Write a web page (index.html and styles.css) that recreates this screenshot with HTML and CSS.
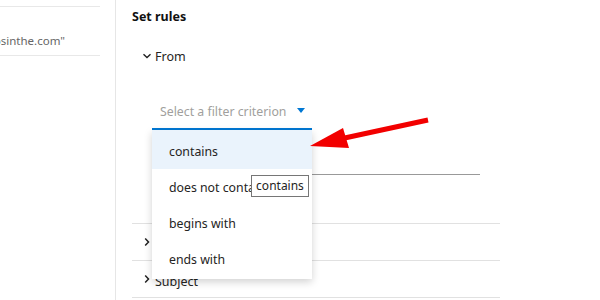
FILE: index.html
```html
<!DOCTYPE html>
<html lang="en">
<head>
  <meta charset="UTF-8" />
  <title>Set rules</title>
  <link rel="stylesheet" href="styles.css">
</head>
<body>
  <div class="sidebar">
    <div class="side-row">
      <span>From "info@absinthe.com"</span>
    </div>
  </div>

  <div class="rules">
    <h2 class="rules-title">Set rules</h2>

    <div class="group-head open">
      <svg class="chev" width="10" height="10" viewBox="0 0 10 10"><path d="M1.5 3.2 L5 6.5 L8.5 3.2" fill="none" stroke="#222" stroke-width="1.4"/></svg>
      <span>From</span>
    </div>

    <div class="filter">
      <div class="select">
        <span class="placeholder">Select a filter criterion</span>
        <svg class="caret" width="8" height="5" viewBox="0 0 8 5"><path d="M0 0 H8 L4 5 Z" fill="#0078d4"/></svg>
      </div>
      <div class="value-line"></div>

      <ul class="menu">
        <li class="active">contains</li>
        <li>does not contain</li>
        <li>begins with</li>
        <li>ends with</li>
      </ul>
      <div class="tip">contains</div>
    </div>

    <div class="group-head closed">
      <svg class="chev" width="10" height="10" viewBox="0 0 10 10"><path d="M3.2 1.5 L6.5 5 L3.2 8.5" fill="none" stroke="#222" stroke-width="1.5"/></svg>
      <span>To</span>
    </div>
    <div class="group-head closed">
      <svg class="chev" width="10" height="10" viewBox="0 0 10 10"><path d="M3.2 1.5 L6.5 5 L3.2 8.5" fill="none" stroke="#222" stroke-width="1.5"/></svg>
      <span>Subject</span>
    </div>
  </div>

  <!-- annotation arrow drawn over the screenshot -->
  <svg class="arrow" width="600" height="300" viewBox="0 0 600 300">
    <line x1="428" y1="120" x2="340" y2="139" stroke="#f20000" stroke-width="5"/>
    <polygon points="310,146 343,128 349,148" fill="#f20000"/>
  </svg>
</body>
</html>
```

FILE: styles.css
```css
* {
  margin: 0;
  padding: 0;
  box-sizing: border-box;
}
body {
  width: 600px;
  height: 300px;
  overflow: hidden;
  display: flex;
  background: #fff;
  font-family: "Noto Sans", "Open Sans", sans-serif;
  color: #252423;
  position: relative;
}
.sidebar {
  width: 116px;
  height: 300px;
  border-right: 1px solid #e6e6e6;
  padding-top: 6px;
}
.side-row {
  width: 100px;
  height: 50px;
  border-top: 1px solid #e8e8e8;
  border-bottom: 1px solid #e8e8e8;
  display: flex;
  justify-content: flex-end;
  align-items: flex-end;
  padding: 0 35px 7px 0;
  overflow: hidden;
  white-space: nowrap;
  font-size: 11.5px;
  color: #666;
}
.side-row span {
  flex-shrink: 0;
}
.rules {
  width: 384px;
  padding-left: 16px;
}
.rules-title {
  font-size: 12.5px;
  font-weight: 700;
  height: 22px;
  line-height: 22px;
  margin-top: 6px;
  color: #111;
}
.group-head {
  display: flex;
  align-items: center;
  gap: 3px;
  font-size: 12.5px;
  padding-left: 10px;
}
.group-head.open {
  margin-top: 17px;
  height: 22px;
}
.group-head.closed {
  height: 37px;
  border-bottom: 1px solid #e1e1e1;
}
.group-head.closed span {
  padding-top: 4px;
}
.filter {
  position: relative;
  margin-top: 33px;
  padding-left: 20px;
  height: 124px;
  border-bottom: 1px solid #e1e1e1;
}
.select {
  width: 160px;
  height: 30px;
  display: flex;
  align-items: center;
  padding: 0 0 6px 8px;
  gap: 11px;
  border-bottom: 2px solid #0078d4;
  font-size: 12.3px;
  white-space: nowrap;
}
.placeholder {
  color: #a19f9d;
}
.caret {
  margin-top: -1px;
}
.value-line {
  width: 320px;
  margin-top: 44px;
  margin-left: 8px;
  border-bottom: 1px solid #999;
}
.menu {
  position: absolute;
  top: 30px;
  left: 20px;
  width: 160px;
  list-style: none;
  background: #fff;
  box-shadow: 0 3px 8px rgba(0, 0, 0, 0.18);
  padding-bottom: 2px;
  z-index: 2;
}
.menu li {
  height: 36px;
  line-height: 38px;
  padding-left: 17px;
  font-size: 12.3px;
  white-space: nowrap;
  overflow: hidden;
}
.menu li.active {
  background: #eaf3fc;
  height: 39px;
  line-height: 44px;
}
.tip {
  position: absolute;
  top: 75px;
  left: 119px;
  z-index: 3;
  width: 58px;
  height: 22px;
  border: 1px solid #767676;
  background: #fff;
  font-size: 12px;
  line-height: 19px;
  text-align: center;
}
.arrow {
  position: absolute;
  top: 0;
  left: 0;
  z-index: 5;
  pointer-events: none;
}
```
